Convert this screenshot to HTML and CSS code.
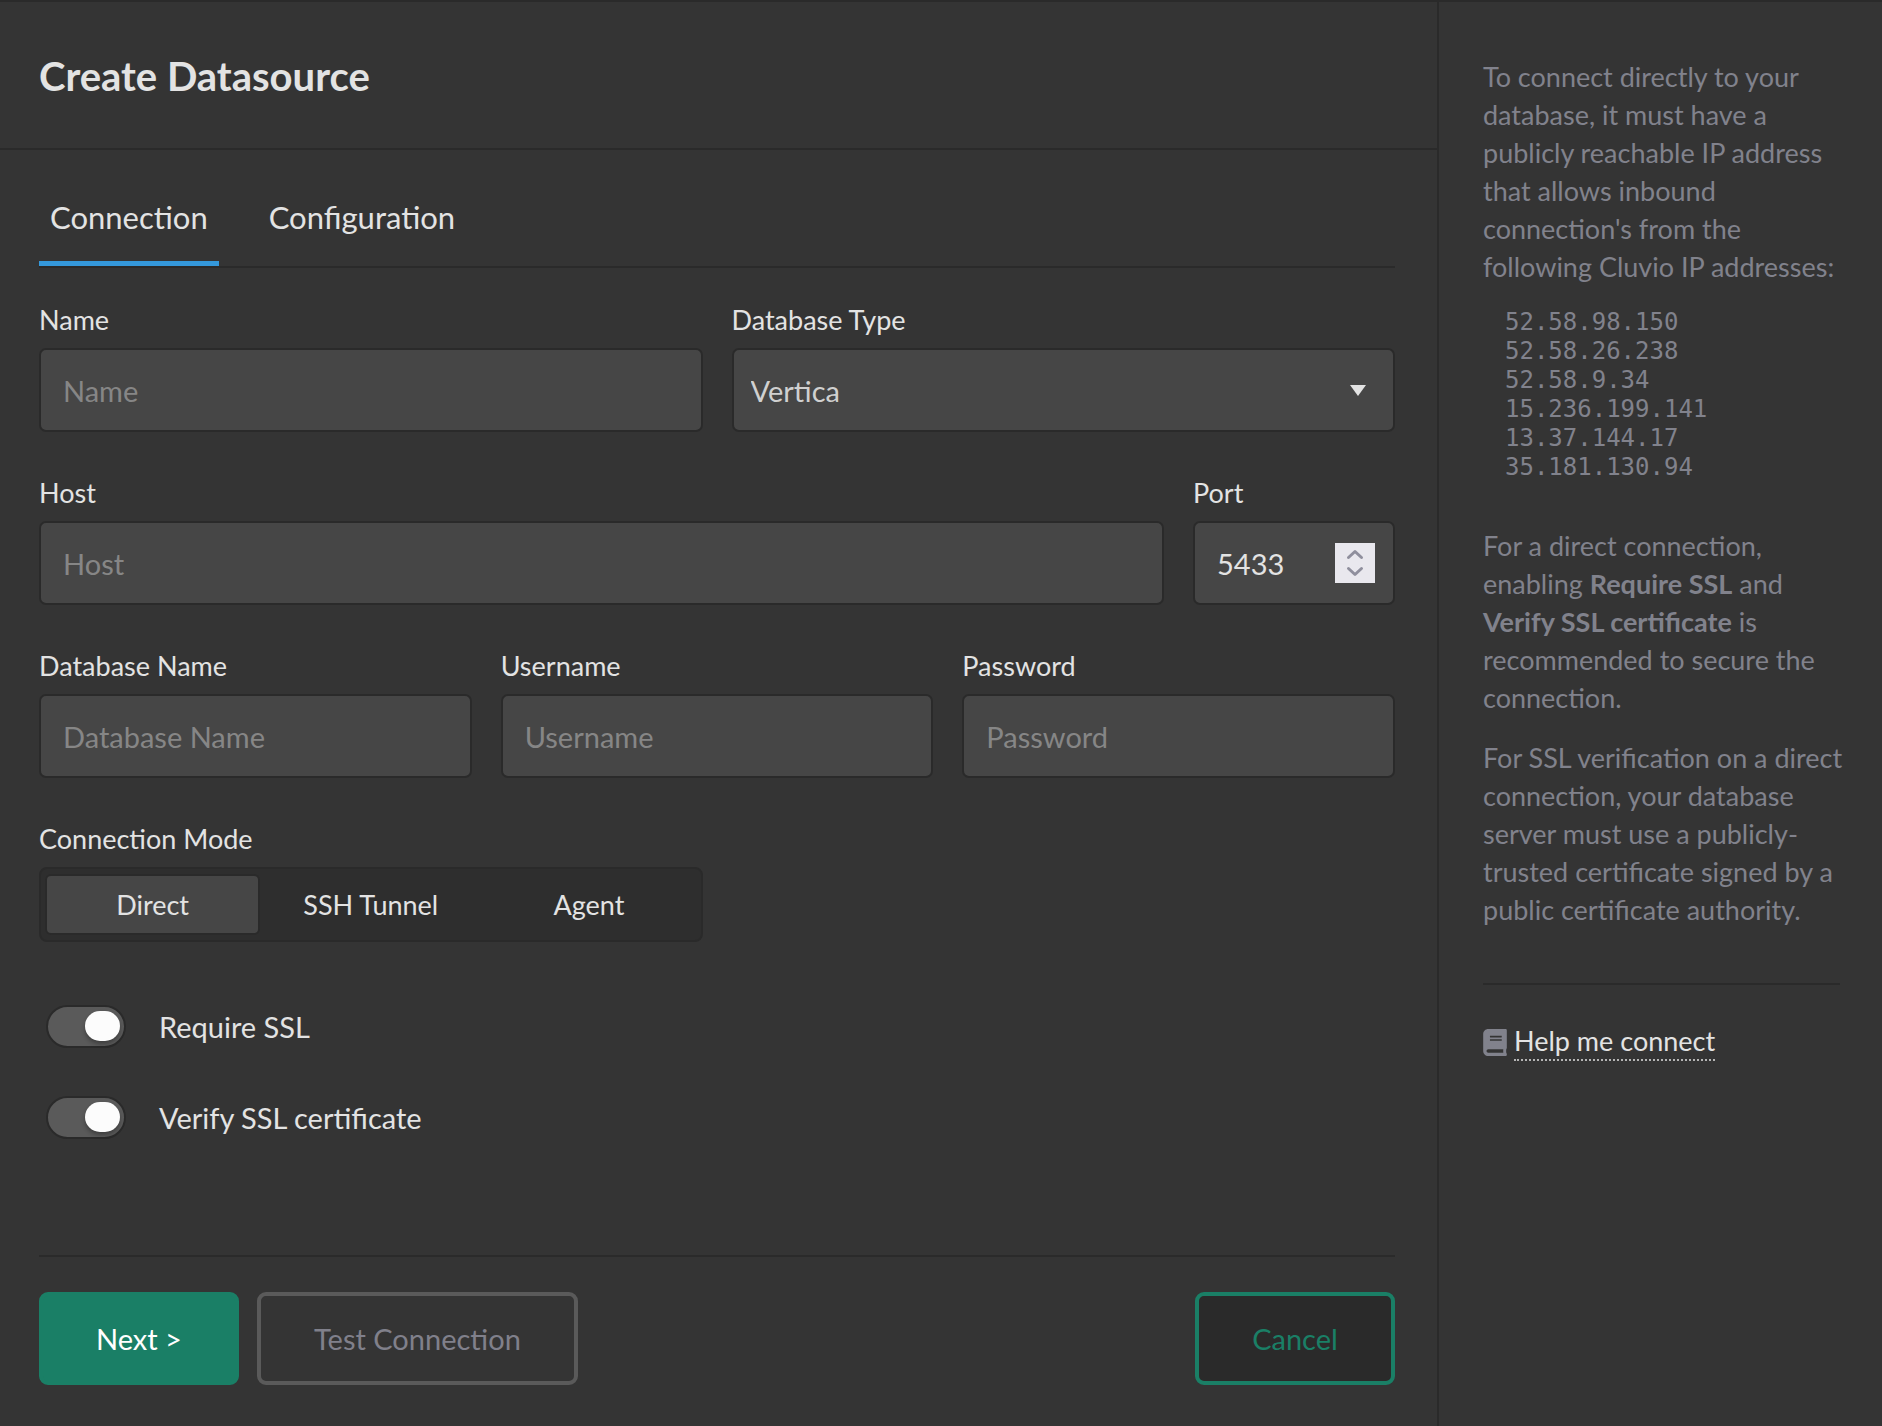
FILE: index.html
```html
<!DOCTYPE html>
<html lang="en">
<head>
  <meta charset="UTF-8">
  <title>Create Datasource</title>
  <link rel="stylesheet" href="styles.css">
</head>
<body>

<div class="page">
  <main class="main">
    <header class="header">
      <h1>Create Datasource</h1>
    </header>

    <form class="content">
      <div class="tabs" role="tablist">
        <button type="button" class="tab active" role="tab" aria-selected="true">Connection</button>
        <button type="button" class="tab" role="tab" aria-selected="false">Configuration</button>
      </div>

      <div class="row halves">
        <div class="field">
          <label for="name">Name</label>
          <input class="control" type="text" id="name" placeholder="Name">
        </div>
        <div class="field">
          <label for="type">Database Type</label>
          <select class="control" id="type">
            <option>Vertica</option>
          </select>
        </div>
      </div>

      <div class="row host">
        <div class="field">
          <label for="host">Host</label>
          <input class="control" type="text" id="host" placeholder="Host">
        </div>
        <div class="field">
          <label for="port">Port</label>
          <input class="control" type="number" id="port" value="5433">
        </div>
      </div>

      <div class="row thirds">
        <div class="field">
          <label for="dbname">Database Name</label>
          <input class="control" type="text" id="dbname" placeholder="Database Name">
        </div>
        <div class="field">
          <label for="username">Username</label>
          <input class="control" type="text" id="username" placeholder="Username">
        </div>
        <div class="field">
          <label for="password">Password</label>
          <input class="control" type="password" id="password" placeholder="Password">
        </div>
      </div>

      <div class="row halves">
        <fieldset class="field">
          <legend>Connection Mode</legend>
          <div class="modes">
            <label class="mode"><input type="radio" name="mode" checked><span>Direct</span></label>
            <label class="mode"><input type="radio" name="mode"><span>SSH Tunnel</span></label>
            <label class="mode"><input type="radio" name="mode"><span>Agent</span></label>
          </div>
        </fieldset>
      </div>

      <div class="switches">
        <label class="switch"><input type="checkbox" checked>Require SSL</label>
        <label class="switch"><input type="checkbox" checked>Verify SSL certificate</label>
      </div>

      <div class="actions">
        <button type="button" class="btn primary">Next &gt;</button>
        <button type="button" class="btn muted">Test Connection</button>
        <button type="button" class="btn cancel">Cancel</button>
      </div>
    </form>
  </main>

  <aside class="aside">
    <p>To connect directly to your database, it must have a publicly reachable IP address that allows inbound connection's from the following Cluvio IP addresses:</p>
    <pre class="ips">52.58.98.150
52.58.26.238
52.58.9.34
15.236.199.141
13.37.144.17
35.181.130.94</pre>
    <p>For a direct connection, enabling <b>Require SSL</b> and <b>Verify SSL certificate</b> is recommended to secure the connection.</p>
    <p>For SSL verification on a direct connection, your database server must use a publicly-trusted certificate signed by a public certificate authority.</p>
    <hr>
    <div class="help">
      <svg class="book" viewBox="0 0 448 512" aria-hidden="true">
        <path fill="currentColor" d="M448 360V24c0-13.3-10.7-24-24-24H96C43 0 0 43 0 96v320c0 53 43 96 96 96h328c13.3 0 24-10.7 24-24v-16c0-7.5-3.5-14.3-8.9-18.7-4.2-15.4-4.2-59.3 0-74.7 5.4-4.3 8.9-11.1 8.9-18.6zM128 134c0-3.3 2.7-6 6-6h212c3.3 0 6 2.7 6 6v20c0 3.3-2.7 6-6 6H134c-3.3 0-6-2.7-6-6v-20zm0 64c0-3.3 2.7-6 6-6h212c3.3 0 6 2.7 6 6v20c0 3.3-2.7 6-6 6H134c-3.3 0-6-2.7-6-6v-20zm253.4 250H96c-17.7 0-32-14.3-32-32 0-17.6 14.4-32 32-32h285.4c-1.9 17.1-1.9 46.9 0 64z"/>
      </svg>
      <a href="#">Help me connect</a>
    </div>
  </aside>
</div>

</body>
</html>
```

FILE: styles.css
```css
* {
  box-sizing: border-box;
}

body {
  margin: 0;
  background: #343434;
  color: #e3e3e3;
  font-family: Lato, "Open Sans", sans-serif;
  font-size: 29px;
}

button, input, select {
  font: inherit;
  color: inherit;
}

.page {
  display: flex;
  min-height: 100vh;
  border-top: 2px solid #2a2a2a;
}

.main {
  flex: 1;
  display: flex;
  flex-direction: column;
}

.header {
  padding: 50px 39px 48px;
  border-bottom: 2px solid #2a2a2a;
}

h1 {
  margin: 0;
  font-size: 40px;
  line-height: 48px;
}

.content {
  flex: 1;
  display: flex;
  flex-direction: column;
  padding: 32px 42px 41px 39px;
}

/* tabs */
.tabs {
  display: flex;
  gap: 39px;
  margin-bottom: 34px;
  border-bottom: 2px solid #2a2a2a;
}

.tab {
  padding: 17px 11px 26px;
  border: 0;
  border-bottom: 5px solid transparent;
  background: none;
  font-size: 31px;
  line-height: 36px;
}

.tab.active {
  border-bottom-color: #3498db;
}

/* fields */
.row {
  display: grid;
  gap: 29px;
  margin-bottom: 43px;
}

.halves {
  grid-template-columns: 1fr 1fr;
}

.host {
  grid-template-columns: 1fr 202px;
}

.thirds {
  grid-template-columns: 1fr 1fr 1fr;
}

.field {
  min-width: 0;
  margin: 0;
  padding: 0;
  border: 0;
}

.field > label,
legend {
  display: block;
  padding: 0;
  margin-bottom: 10px;
  font-size: 27px;
  line-height: 36px;
}

.control {
  display: block;
  width: 100%;
  height: 84px;
  padding: 0 22px;
  border: 2px solid #2a2a2a;
  border-radius: 7px;
  background: #464646;
}

.control::placeholder {
  color: #868686;
}

select.control {
  appearance: none;
  padding: 0 17px;
  color: #d0d0d0;
  background: #464646 url("data:image/svg+xml,%3Csvg xmlns='http://www.w3.org/2000/svg' viewBox='0 0 16 11'%3E%3Cpath fill='%23e3e3e3' d='M0 0h16L8 11z'/%3E%3C/svg%3E") no-repeat right 27px center / 16px 11px;
}

input[type="number"] {
  padding-right: 18px;
}

input[type="number"]::-webkit-inner-spin-button {
  appearance: none;
  width: 40px;
  height: 40px;
  opacity: 1;
  background: #e9e8ee url("data:image/svg+xml,%3Csvg xmlns='http://www.w3.org/2000/svg' viewBox='0 0 40 40'%3E%3Cpath fill='none' stroke='%238f8f9d' stroke-width='3' stroke-linecap='round' stroke-linejoin='round' d='M13.500 14.500L20 8.500l6.500 6M13.500 25.500L20 31.500l6.500-6'/%3E%3C/svg%3E");
}

/* connection mode */
.modes {
  display: flex;
  gap: 3px;
  padding: 5px 4px;
  border: 2px solid #2a2a2a;
  border-radius: 8px;
  background: #2e2e2e;
}

.mode {
  flex: 1;
}

.mode input {
  position: absolute;
  opacity: 0;
}

.mode span {
  display: block;
  border: 2px solid transparent;
  border-radius: 6px;
  font-size: 27px;
  line-height: 57px;
  text-align: center;
}

.mode input:checked + span {
  border-color: #2a2a2a;
  background: #464646;
}

/* switches */
.switches {
  display: flex;
  flex-direction: column;
  gap: 48px;
  margin: 20px 0 0 7px;
}

.switch {
  display: flex;
  align-items: center;
  gap: 33px;
  line-height: 43px;
}

.switch input {
  appearance: none;
  display: flex;
  justify-content: flex-end;
  width: 80px;
  height: 43px;
  margin: 0;
  padding: 4px 4px 5px;
  border: 2px solid #2a2a2a;
  border-radius: 22px;
  background: #5a5a5a;
}

.switch input::before {
  content: "";
  width: 35px;
  height: 30px;
  border-radius: 15px;
  background: #fcfcfc;
  box-shadow: 0 3px 4px rgba(0, 0, 0, .3);
}

/* footer buttons */
.actions {
  display: flex;
  gap: 18px;
  margin-top: auto;
  padding-top: 35px;
  border-top: 2px solid #2a2a2a;
}

.btn {
  min-width: 200px;
  height: 93px;
  padding: 0 53px;
  border: 4px solid #1a7f66;
  border-radius: 9px;
}

.primary {
  background: #1a7f66;
  color: #fff;
}

.muted {
  border-color: #5a5a5a;
  background: none;
  color: #80808b;
}

.cancel {
  margin-left: auto;
  background: #2a2a2a;
  color: #1a7f66;
}

/* help column */
.aside {
  width: 445px;
  padding: 56px 36px 0 44px;
  border-left: 2px solid #2a2a2a;
  color: #81828c;
  font-size: 27px;
  line-height: 38px;
}

.aside p {
  margin: 0 0 22px;
}

.aside .ips {
  margin: 0 0 45px;
  padding-left: 22px;
  font-family: "DejaVu Sans Mono", monospace;
  font-size: 24px;
  line-height: 29px;
}

.aside hr {
  margin: 54px 6px 38px 0;
  border: 0;
  border-top: 2px solid #2a2a2a;
}

.help {
  display: flex;
  align-items: center;
  gap: 7px;
}

.book {
  width: 24px;
  height: 27px;
}

.help a {
  border-bottom: 2px dotted #b5b5b5;
  color: #e3e3e3;
  line-height: 36px;
  text-decoration: none;
}
```
